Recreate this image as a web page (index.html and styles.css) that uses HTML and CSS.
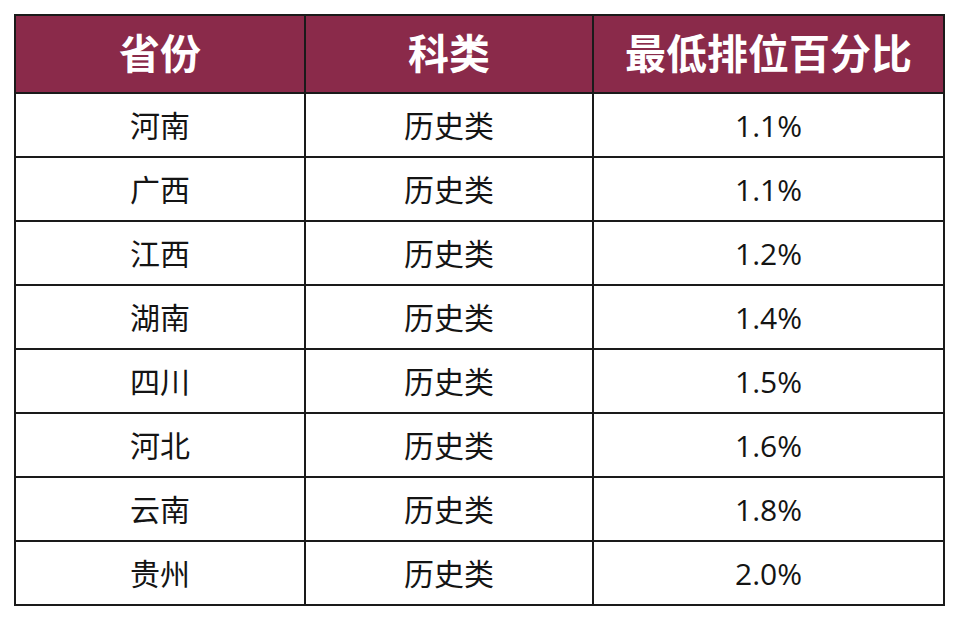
FILE: index.html
```html
<!DOCTYPE html>
<html>
<head>
	<meta charset="utf-8">
	<title>最低排位百分比</title>
	<link rel="stylesheet" href="styles.css">
</head>
<body>
<table class="rankTable">
	<thead>
		<tr>
			<th class="colProv">省份</th>
			<th class="colType">科类</th>
			<th class="colPct">最低排位百分比</th>
		</tr>
	</thead>
	<tbody>
		<tr><td>河南</td><td>历史类</td><td class="num">1.1%</td></tr>
		<tr><td>广西</td><td>历史类</td><td class="num">1.1%</td></tr>
		<tr><td>江西</td><td>历史类</td><td class="num">1.2%</td></tr>
		<tr><td>湖南</td><td>历史类</td><td class="num">1.4%</td></tr>
		<tr><td>四川</td><td>历史类</td><td class="num">1.5%</td></tr>
		<tr><td>河北</td><td>历史类</td><td class="num">1.6%</td></tr>
		<tr><td>云南</td><td>历史类</td><td class="num">1.8%</td></tr>
		<tr><td>贵州</td><td>历史类</td><td class="num">2.0%</td></tr>
	</tbody>
</table>
</body>
</html>
```

FILE: styles.css
```css
*{
	padding: 0px;
	margin: 0px;
	box-sizing: border-box;
}
body{
	background-color: #ffffff;
	font-family: "Open Sans", "Noto Sans CJK SC", sans-serif;
	color: #141414;
	padding: 14px 0 0 14px;
}
.rankTable{
	border-collapse: collapse;
	width: 931px;
	table-layout: fixed;
}
.rankTable th, .rankTable td{
	border: 2px solid #1a1a1a;
	text-align: center;
	vertical-align: middle;
}
.rankTable th{
	height: 78px;
	background-color: #8a2a4a;
	color: #ffffff;
	font-family: "Noto Sans CJK SC", sans-serif;
	font-size: 41px;
	font-weight: 700;
	line-height: 1;
	padding-bottom: 6px;
}
.rankTable td{
	height: 64px;
	font-size: 30px;
	line-height: 1;
	padding-top: 1px;
}
.colProv{
	width: 290px;
}
.colType{
	width: 288px;
}
.num{
	font-size: 30px;
}
```
